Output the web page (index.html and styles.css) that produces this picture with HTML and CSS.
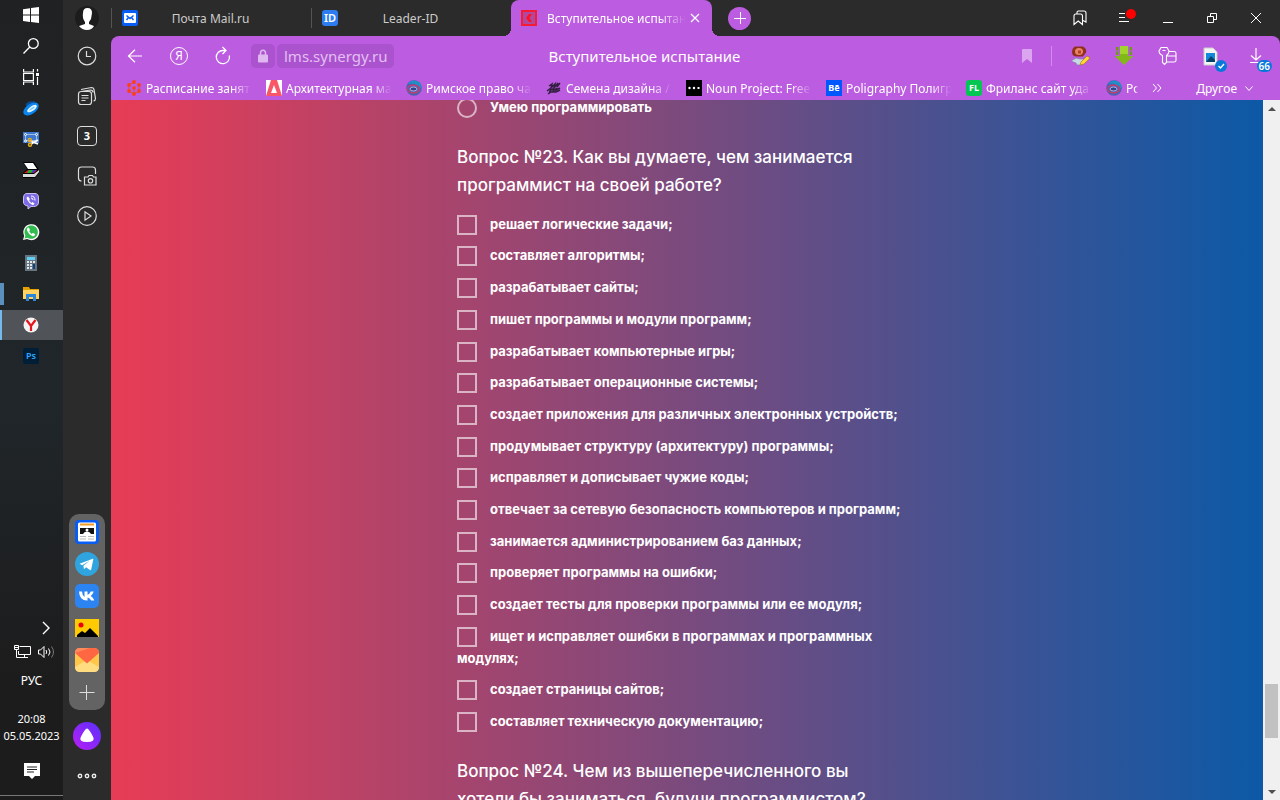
FILE: index.html
```html
<!DOCTYPE html>
<html lang="ru">
<head>
<meta charset="utf-8">
<title>Вступительное испытание</title>
<link rel="stylesheet" href="styles.css">
</head>
<body>
<nav class="taskbar" aria-label="Панель задач">
  <div class="apps">
    <button class="app" aria-label="Пуск"><svg width="16" height="16" viewBox="0 0 16 16" fill="#fff"><path d="M0 2.2 7 1.2V7.6H0zM8 1 16 0V7.6H8zM0 8.6H7V15L0 14zM8 8.6H16V16L8 15z"/></svg></button>
    <button class="app" aria-label="Поиск"><svg width="16" height="16" viewBox="0 0 16 16" fill="none" stroke="#fff" stroke-width="1.3"><circle cx="10.3" cy="5.5" r="4.9"/><path d="M6.8 9 .5 15.5"/></svg></button>
    <button class="app" aria-label="Представление задач"><svg width="16" height="16" viewBox="0 0 16 16" fill="none" stroke="#fff" stroke-width="1.2"><path d="M.6 0V3H10.4V0M.6 16V13H10.4V16M.6 4.5H10.4V11.5H.6zM14.5 0V2.5M14.5 8V16"/><path d="M13 4h3v3h-3z" fill="#fff" stroke="none"/></svg></button>
    <button class="app" aria-label="Браузер"><svg width="16" height="16" viewBox="0 0 16 16"><path d="M2.500 4 6 1.500l6-.5-2 3-6 3z" fill="#0b4d91"/><ellipse cx="8" cy="9" rx="8.800" ry="5" transform="rotate(-35 8 9)" fill="#0a84ee"/><ellipse cx="9" cy="8.600" rx="5.600" ry="2.400" transform="rotate(-35 9 8.600)" fill="#e9f9ff"/><ellipse cx="9" cy="8.600" rx="3.400" ry=".9" transform="rotate(-35 9 8.600)" fill="#7fd0ff"/></svg></button>
    <button class="app" aria-label="Ножницы"><svg width="16" height="16" viewBox="0 0 16 16"><path d="M0 1h16v11H0z" fill="#3f78cf"/><path d="M2.5 3.5h11v6h-11z" fill="none" stroke="#fff" stroke-dasharray="1 1"/><g fill="#3f78cf" stroke="#fff"><circle cx="2.5" cy="3.5" r="1"/><circle cx="13.5" cy="3.5" r="1"/><circle cx="2.5" cy="10" r="1"/></g><path d="m7 10 8 3M8 13l7-4" stroke="#fff" stroke-width="1.7"/><g fill="none" stroke="#e2aa20" stroke-width="1.5"><circle cx="6.8" cy="9" r="1.5"/><circle cx="7" cy="13.7" r="1.5"/></g></svg></button>
    <button class="app" aria-label="Сканер"><svg width="16" height="16" viewBox="0 0 16 16"><path d="M0 0h11l5 8v3l-4 5H0v-5l4-4z" fill="#000"/><path d="M1 1h9l4 6H5z" fill="#fff"/><path d="m1 11 4-3h9l-3 3z" fill="#e12"/><path d="m6 8 4 0-2 3H4z" fill="#10b431"/><path d="m10 8 3 0-3 3H9z" fill="#163ff0"/><path d="M0 12h11l5-4v2l-4 5H0z" fill="#d9d9d9"/></svg></button>
    <button class="app" aria-label="Viber"><svg width="16" height="16" viewBox="0 0 16 16"><path d="M4 .5h8Q15.5.5 15.5 5v4q0 4.5-5 4.5H8L5 16v-3Q.5 12.500.5 9V5Q.5.5 4 .5z" fill="#7c6be7" stroke="#c8bff5"/><path d="M5 3.500Q3 4 4 6.500q2 4 5.500 5.500 1.500 0 2-1.500l-2-1.500-1 1Q6.500 9 6 7l1-.8z" fill="#fff"/><path d="M8 3q4 0 4 4.500M8 5q2 0 2 2" fill="none" stroke="#fff"/></svg></button>
    <button class="app" aria-label="WhatsApp"><svg width="16" height="16" viewBox="0 0 16 16"><path d="M0 16 1.200 11.800A8 8 0 1 1 4.200 15z" fill="#fff"/><path d="m1.500 14.500.9-3A6.700 6.700 0 1 1 4.500 13.700z" fill="#32bb4f"/><path d="M5 3.500Q3.300 4.500 4 6.500q1.500 4 5.500 5.700 2.300.3 2.800-2L10 8.800l-1.200 1.100Q7 9 6.200 7.300L7 6.200 6 3.700z" fill="#fff"/></svg></button>
    <button class="app" aria-label="Калькулятор"><svg width="16" height="16" viewBox="0 0 16 16"><path d="M2 0h12v16H2z" fill="#66747f"/><path d="M4 2h8v3H4z" fill="#5fd0f3"/><path d="M4 6h2v2H4zm3 0h2v2H7zm3 0h2v2h-2zM4 9h2v2H4zm3 0h2v2H7zM4 12h2v2H4zm3 0h2v2H7z" fill="#e2e7eb"/><path d="M10 9h2v5h-2z" fill="#15407e"/></svg></button>
    <button class="app opened" aria-label="Проводник"><svg width="16" height="16" viewBox="0 0 16 16"><path d="M0 1h6l1 2h9v3H0z" fill="#e6a100"/><path d="M0 4h16v9H0z" fill="#ffd362"/><path d="M3 15V8h10v7h-3v-4H6v4z" fill="#2e86d7"/></svg></button>
    <button class="app current" aria-label="Яндекс Браузер"><svg width="16" height="16" viewBox="0 0 16 16"><circle cx="8" cy="8" r="7.500" fill="#f4f4f4"/><path d="M3.500 3 8 9l4.500-6M8 8.500V14" fill="none" stroke="#e5141d" stroke-width="2.200"/></svg></button>
    <button class="app" aria-label="Photoshop"><span class="ps">Ps</span></button>
  </div>
  <div class="tray">
    <button class="chev" aria-label="Скрытые значки"><svg width="8" height="12" viewBox="0 0 8 12" fill="none" stroke="#fff" stroke-width="1.400"><path d="m1 0 6 6-6 6"/></svg></button>
    <div class="status">
      <svg width="17" height="14" viewBox="0 0 17 14" fill="none" stroke="#fff"><path d="M5.500 1.500h11v8h-12V6M10.500 9.500v3M6 12.500h8M.5.500h4v4h-4zM2.500 4.500v8H6M1 2.500h3"/></svg>
      <svg width="17" height="14" viewBox="0 0 17 14" fill="none" stroke="#fff"><path d="M.5 5h2L6 1.500v11L2.500 9h-2zM8 5q1.500 2 0 4M10.500 3.500q3 3.500 0 7"/><path d="M13.500 1.500q4 5.500 0 11" stroke="#777"/></svg>
    </div>
    <span class="lang">РУС</span>
    <time class="clock">20:08<br>05.05.2023</time>
    <button class="notes" aria-label="Уведомления"><svg width="16" height="16" viewBox="0 0 16 16"><path d="M0 0h16v13h-5l-3 3-3-3H0z" fill="#fff"/><path d="M3 4h10M3 6.500h10M3 9h7" stroke="#222"/></svg></button>
  </div>
</nav>

<aside class="side">
  <div class="tools">
    <button aria-label="Профиль"><svg width="24" height="24" viewBox="0 0 24 24"><circle cx="12" cy="12" r="12" fill="#1c1c1c"/><path d="M8 7q0-5 4.500-5T17 7l-1 6-2 3v2l5 2q-2 4-7 4t-8-4l6-2v-2Q7 12 8 7z" fill="#fff"/></svg></button>
    <button aria-label="История"><svg width="20" height="20" viewBox="0 0 20 20" fill="none" stroke="#ddd" stroke-width="1.200"><circle cx="10" cy="10" r="8.800"/><path d="M9.500 5v5.500H14"/></svg></button>
    <button aria-label="Коллекции"><svg width="20" height="20" viewBox="0 0 20 20" fill="none" stroke="#ddd" stroke-width="1.200"><rect x="1.500" y="5.500" width="13" height="13" rx="2.500"/><path d="M4.500 9.500h7M4.500 12h7M4.500 14.500h4M4 3.500l10.500-2Q16.500 1.500 17 3.500l1.500 9q0 2-2 2.500M4 5.500l9.500-1.500Q16 4 16 6.500"/></svg></button>
    <button aria-label="Вкладки"><span class="count">3</span></button>
    <button aria-label="Скриншот"><svg width="20" height="20" viewBox="0 0 20 20" fill="none" stroke="#ddd" stroke-width="1.200"><path d="M4.500 15Q1.500 15 1.500 12V4q0-3 3-3h11q3 0 3 3v4M8.500 11H11l1-1.500h3.500l1 1.500h2.500v8h-11.500v-8z"/><circle cx="13.500" cy="14.800" r="2.200"/></svg></button>
    <button aria-label="Видео"><svg width="20" height="20" viewBox="0 0 20 20" fill="none" stroke="#ddd" stroke-width="1.200"><circle cx="10" cy="10" r="9.300"/><path d="M8 5.800v8.400l6-4.200z"/></svg></button>
  </div>
  <div class="bottom">
    <div class="dock">
      <button aria-label="Новости"><svg width="24" height="24" viewBox="0 0 24 24"><rect width="24" height="24" rx="4" fill="#075df4"/><rect x="3" y="2.500" width="18" height="19" rx="1.500" fill="#fff"/><path d="M5 4.500h14" stroke="#f39a20" stroke-width="2"/><path d="M5 8h14v6H5z" fill="#111"/><circle cx="12" cy="10" r="1.500" fill="#fff"/><path d="M8 14q1-2.500 4-2.500t4 2.500z" fill="#fff"/><path d="M5 16.500h6M5 19h6M13 16.500h6M13 19h6" stroke="#bbb"/></svg></button>
      <button aria-label="Telegram"><svg width="24" height="24" viewBox="0 0 24 24"><circle cx="12" cy="12" r="12" fill="#2fa4de"/><path d="m4.500 11.800 13.200-5q.8-.2.600.8l-2.100 10q-.3 1-1.200.500L11 15.300l-2 2-.6-3.500L15 8.500l-7.800 4.700z" fill="#fff"/></svg></button>
      <button aria-label="ВКонтакте"><svg width="24" height="24" viewBox="0 0 24 24"><rect width="24" height="24" rx="5" fill="#2b84f2"/><path d="M4 7.500h3q.2 4 2.500 5.500v-5.500h3v3.200q2-.4 3.200-3.200h3q-.8 2.800-3 4.400 2.500 1.300 3.600 4.600h-3.200q-1.100-2.700-3.600-3v3H12Q4.300 16.500 4 7.500z" fill="#fff"/></svg></button>
      <button aria-label="Картинки"><svg width="24" height="24" viewBox="0 0 24 24"><path d="M0 3h24v18H0z" fill="#ffcb00"/><path d="M2 21v-2l5-4 3 2 5-5 8 8v1z" fill="#000"/><circle cx="6" cy="9" r="2.500" fill="#eb0010"/></svg></button>
      <button aria-label="Яндекс Почта"><svg width="24" height="24" viewBox="0 0 24 24"><rect width="24" height="24" rx="5" fill="#ffc64a"/><path d="M0 19 12 12l12 7q0 5-5 5H5q-5 0-5-5z" fill="#ffdc80"/><path d="M0 5q0-5 5-5h14q5 0 5 5L12 15.500z" fill="#ff6642"/><path d="M0 5q0-5 5-5h10z" fill="#ff8a5c"/></svg></button>
      <button aria-label="Добавить"><svg width="24" height="24" viewBox="0 0 24 24" stroke="#ddd"><path d="M4.500 12.500h15M11.500 5v15"/></svg></button>
    </div>
    <button class="alice" aria-label="Алиса"><svg width="28" height="28" viewBox="0 0 28 28"><defs><linearGradient id="al" x1="0" y1="1" x2="1" y2="0"><stop stop-color="#bb1ef5"/><stop offset="1" stop-color="#5730fb"/></linearGradient></defs><circle cx="14" cy="14" r="14" fill="url(#al)"/><path d="M14 6.500q2 0 6.200 8.500 2.500 5-6.200 5t-6.200-5Q12 6.500 14 6.500z" fill="#fff"/></svg></button>
    <button class="more" aria-label="Ещё"><svg width="20" height="6" viewBox="0 0 20 6" fill="none" stroke="#eee" stroke-width="1.400"><circle cx="3" cy="3" r="1.700"/><circle cx="10" cy="3" r="1.700"/><circle cx="17" cy="3" r="1.700"/></svg></button>
  </div>
</aside>

<div class="browser">
  <header class="strip">
    <div class="tab"><svg class="fav" viewBox="0 0 16 16"><rect width="16" height="16" rx="2" fill="#075df4"/><rect x="2" y="3" width="12" height="10" rx="1" fill="#fff"/><path d="m4.500 10 2-2.500M11.500 10l-2-2.500M4.500 5.500 8 8.500l3.500-3" fill="none" stroke="#075df4" stroke-width="1.500"/></svg><a href="#mail" class="name">Почта Mail.ru</a></div>
    <div class="tab"><span class="fav id">ID</span><a href="#leader" class="name">Leader-ID</a></div>
    <div class="tab active"><svg class="fav" viewBox="0 0 16 16"><path d="M1 1h14v14H1z" fill="#b048a0" stroke="#f51b35" stroke-width="2"/><path d="M8 4h3L8.500 8l2.500 4H8L5 8z" fill="#ff1024"/></svg><a href="#test" class="name">Вступительное испытан</a><button aria-label="Закрыть вкладку"><svg width="10" height="10" viewBox="0 0 10 10" stroke="#fff" stroke-width="1.200"><path d="m1 1 8 8m0-8L1 9"/></svg></button></div>
    <button class="plus" aria-label="Новая вкладка"><svg width="12" height="12" viewBox="0 0 12 12" stroke="#fff"><path d="M0 6.500h12M6.500 0v12"/></svg></button>
    <div class="window">
      <button aria-label="Закладки"><svg width="14" height="16" viewBox="0 0 14 16" fill="none" stroke="#fff" stroke-width="1.100"><path d="M1 14.500V6q0-2 2-2h4.500q2 0 2 2v8.500L5.200 11zM4 4V2.500Q4 1 5.500 1H11q2 0 2 2v9l-3-1.500"/></svg></button>
      <button class="menu" aria-label="Меню"><svg width="20" height="16" viewBox="0 0 20 16" stroke="#fff"><path d="M1 3.500h6M1 7.500h6M1 11.500h10"/><circle cx="13" cy="4" r="5" fill="#f00" stroke="none"/></svg></button>
      <button aria-label="Свернуть"><svg width="10" height="12" viewBox="0 0 10 12" stroke="#fff"><path d="M0 10.500h10"/></svg></button>
      <button aria-label="Восстановить"><svg width="12" height="12" viewBox="0 0 12 12" fill="none" stroke="#fff"><path d="M1.500 4.500h6v6h-6zM4.500 4.500v-3h6v6h-3"/></svg></button>
      <button aria-label="Закрыть"><svg width="12" height="12" viewBox="0 0 12 12" stroke="#fff"><path d="m1 1 10 10m0-10L1 11"/></svg></button>
    </div>
  </header>
  <div class="chrome">
    <div class="address">
      <button aria-label="Назад"><svg width="16" height="14" viewBox="0 0 16 14" fill="none" stroke="#fff" stroke-width="1.200"><path d="M15 7H1.500M8 .8 1.500 7 8 13.200"/></svg></button>
      <button aria-label="Яндекс"><span class="ya">Я</span></button>
      <button aria-label="Обновить"><svg width="16" height="18" viewBox="0 0 16 18" fill="none" stroke="#fff" stroke-width="1.300"><path d="M14.300 8.500A6.600 6.600 0 1 1 8 3.500h3M7.500 0 11 3.500 7.500 7"/></svg></button>
      <button class="lock" aria-label="Сведения о сайте"><svg width="10" height="14" viewBox="0 0 10 14"><rect y="5.500" width="10" height="8" rx="1" fill="#e0b8f0"/><path d="M2.500 6V4q0-2.800 2.500-2.800T7.500 4v2" fill="none" stroke="#e0b8f0" stroke-width="1.500"/></svg></button>
      <a class="url" href="#site">lms.synergy.ru</a>
      <span class="heading">Вступительное испытание</span>
      <div class="ext">
        <button class="mark" aria-label="В закладки"><svg width="10" height="14" viewBox="0 0 10 14" fill="#dca5ef"><path d="M0 1q0-1 1-1h8q1 0 1 1v13L5 10l-5 4z"/></svg></button>
        <button aria-label="Расширение"><svg width="20" height="20" viewBox="0 0 20 20"><path d="m1 15 5-3 4 1 4 0-3 6H7l-1-2z" fill="#c8d6e8" stroke="#73829a" stroke-width=".6"/><path d="M5 .5h8q4 2 3 6l-3 4H6Q2 10 2 6t3-5.500z" fill="#90301e"/><ellipse cx="9" cy="5.500" rx="4" ry="3.500" fill="#e78566"/><path d="M8 4.500h3v3H8z" fill="#b9402d"/><path d="m11 16 6-6 3 2-6 6-4 1z" fill="#ffd832" stroke="#a16815" stroke-width=".6"/></svg></button>
        <button aria-label="Загрузчик"><svg width="20" height="20" viewBox="0 0 20 20"><path d="M6 0h8v10h5.500L10 19 .5 10H6z" fill="#82b81a"/><path d="M6 0h8v8H6z" fill="#a2d52c"/><path d="M2 1h2.500v3.500H2zM15.500 1H18v3.500h-2.500zM2 6l2.500-1v4H2zM15.500 5 18 6v3h-2.500z" fill="#6c9c10"/></svg></button>
        <button aria-label="Пароли"><svg width="18" height="18" viewBox="0 0 18 18" fill="none" stroke="#fff" stroke-width="1.100"><path d="M3.500 8.500Q0 7 0 4l2-3.500h6L10 4q0 3-2.500 4.500v7L5.500 17.500l-2-2zM3.500 3.500h3M10 4.500h5q2 0 2 2v7q0 1.500-2 1.500H8M8 9h9"/></svg></button>
        <button class="doc" aria-label="Документы"><svg width="24" height="24" viewBox="0 0 24 24"><path d="M1 1h9l4 4v13H1z" fill="#f4f4f4" stroke="#ccc"/><path d="M3 6h9v9H3z" fill="#1488db"/><path d="m3 15 5-6 4 4v2z" fill="#074068"/><circle cx="18" cy="19" r="6" fill="#0878db"/><path d="m15.500 19 2 2 3.500-4" fill="none" stroke="#fff" stroke-width="1.400"/></svg></button>
        <button class="down" aria-label="Загрузки"><svg width="14" height="16" viewBox="0 0 14 16" fill="none" stroke="#fff" stroke-width="1.200"><path d="M7 0v12M2 7.500 7 12l5-4.500M1 14.500h12"/></svg><span class="badge">66</span></button>
      </div>
    </div>
    <div class="marks">
      <a href="#b1"><svg class="fav" viewBox="0 0 16 16"><path d="m8 2-5 3v6l5 3 5-3V5" fill="none" stroke="#e04b3a"/><path d="M8 8v6" stroke="#e04b3a"/><g fill="#ff3e14"><circle cx="8" cy="2" r="1.900"/><circle cx="3" cy="5" r="1.900"/><circle cx="13" cy="5" r="1.900"/><circle cx="3" cy="11" r="1.900"/><circle cx="13" cy="11" r="1.900"/><circle cx="8" cy="14" r="1.900"/><circle cx="8" cy="8" r="1.800"/></g></svg><span>Расписание занят</span></a>
      <a href="#b2"><svg class="fav" viewBox="0 0 16 16"><path d="M0 0h16v16H0z" fill="#f9566a"/><path d="M0 0h5L0 16zM11 0h5v16zM8 5l3 8H5z" fill="#fff"/></svg><span>Архитектурная ма</span></a>
      <a href="#b3"><svg class="fav" viewBox="0 0 16 16"><circle cx="8" cy="8" r="7.800" fill="#4a62b4"/><path d="M1.500 4Q6-1 11 1q5 2 4.500 8Q10 2 1.500 4z" fill="#2090c4"/><ellipse cx="7.500" cy="9" rx="6" ry="3.800" fill="none" stroke="#d03a68" stroke-width="1.300"/><ellipse cx="7.500" cy="9" rx="3.500" ry="2" fill="#274995" stroke="#c9a9d9"/></svg><span>Римское право ча</span></a>
      <a href="#b4"><svg class="fav" viewBox="0 0 16 16" fill="none" stroke="#352044" stroke-width="1.500"><path d="m3 6 3-2-1 4 4-4-1 4 4-5-1 4 3-4M1 11l4-3-1 3 4-3-1 3 4-3-1 2 4-2M2 14l3-2 5 0 4-2"/></svg><span>Семена дизайна /</span></a>
      <a href="#b5"><svg class="fav" viewBox="0 0 16 16"><path d="M0 0h16v16H0z"/><g fill="#fff"><circle cx="3.500" cy="8" r="1.200"/><circle cx="8" cy="8" r="1.200"/><path d="M11.500 7h2v2h-2z"/></g></svg><span>Noun Project: Free</span></a>
      <a href="#b6"><b class="fav be">Bē</b><span>Poligraphy Полигр</span></a>
      <a href="#b7"><b class="fav fl">FL</b><span>Фриланс сайт уда</span></a>
      <a href="#b8" class="short"><svg class="fav" viewBox="0 0 16 16"><circle cx="8" cy="8" r="7.800" fill="#4a62b4"/><path d="M1.500 4Q6-1 11 1q5 2 4.500 8Q10 2 1.500 4z" fill="#2090c4"/><ellipse cx="7.500" cy="9" rx="6" ry="3.800" fill="none" stroke="#d03a68" stroke-width="1.300"/><ellipse cx="7.500" cy="9" rx="3.500" ry="2" fill="#274995" stroke="#c9a9d9"/></svg><span>Ро</span></a>
      <button class="next" aria-label="Ещё закладки"><svg width="10" height="8" viewBox="0 0 10 8" fill="none" stroke="#fff"><path d="m1 0 3.500 4L1 8M5.500 0 9 4 5.500 8"/></svg></button>
      <button class="other">Другое<svg width="8" height="5" viewBox="0 0 8 5" fill="none" stroke="#fff"><path d="m.5.500 3.500 4 3.500-4"/></svg></button>
    </div>
  </div>
  <div class="view">
    <main class="page">
      <form class="quiz">
        <label class="opt radio"><input type="radio" name="q22">Умею программировать</label>
        <fieldset>
          <legend>Вопрос №23. Как вы думаете, чем занимается программист на своей работе?</legend>
          <label class="opt"><input type="checkbox">решает логические задачи;</label>
          <label class="opt"><input type="checkbox">составляет алгоритмы;</label>
          <label class="opt"><input type="checkbox">разрабатывает сайты;</label>
          <label class="opt"><input type="checkbox">пишет программы и модули программ;</label>
          <label class="opt"><input type="checkbox">разрабатывает компьютерные игры;</label>
          <label class="opt"><input type="checkbox">разрабатывает операционные системы;</label>
          <label class="opt"><input type="checkbox">создает приложения для различных электронных устройств;</label>
          <label class="opt"><input type="checkbox">продумывает структуру (архитектуру) программы;</label>
          <label class="opt"><input type="checkbox">исправляет и дописывает чужие коды;</label>
          <label class="opt"><input type="checkbox">отвечает за сетевую безопасность компьютеров и программ;</label>
          <label class="opt"><input type="checkbox">занимается администрированием баз данных;</label>
          <label class="opt"><input type="checkbox">проверяет программы на ошибки;</label>
          <label class="opt"><input type="checkbox">создает тесты для проверки программы или ее модуля;</label>
          <label class="opt"><input type="checkbox">ищет и исправляет ошибки в программах и программных модулях;</label>
          <label class="opt"><input type="checkbox">создает страницы сайтов;</label>
          <label class="opt"><input type="checkbox">составляет техническую документацию;</label>
        </fieldset>
        <fieldset>
          <legend>Вопрос №24. Чем из вышеперечисленного вы хотели бы заниматься, будучи программистом?</legend>
        </fieldset>
      </form>
    </main>
    <div class="scroll">
      <button aria-label="Вверх"><svg width="8" height="4" viewBox="0 0 8 4" fill="#505050"><path d="m0 4 4-4 4 4z"/></svg></button>
      <div class="track"><div class="thumb"></div></div>
      <button aria-label="Вниз"><svg width="8" height="4" viewBox="0 0 8 4" fill="#505050"><path d="m0 0 4 4 4-4z"/></svg></button>
    </div>
  </div>
</div>
</body>
</html>
```

FILE: styles.css
```css
* { box-sizing: border-box; }

body {
  margin: 0;
  height: 100vh;
  overflow: hidden;
  display: grid;
  grid-template-columns: 63px 48px minmax(0, 1fr);
  background: #2b2b2b;
  color: #fff;
  font: 13px/16px "Noto Sans", "Open Sans", sans-serif;
}

button {
  display: flex;
  align-items: center;
  justify-content: center;
  margin: 0;
  padding: 0;
  border: 0;
  background: none;
  color: inherit;
  font: inherit;
}

a { color: inherit; text-decoration: none; }
svg { display: block; flex: none; overflow: visible; }

/* System taskbar */
.taskbar {
  display: flex;
  flex-direction: column;
  justify-content: space-between;
  background: linear-gradient(#202122, #20262a 50%, #1c1c1c 85%);
}
.apps { display: flex; flex-direction: column; gap: 1px; }
.app { height: 30px; padding-right: 1px; }
.opened { background: linear-gradient(90deg, #5b8fbe 4px, transparent 4px) center / 100% 22px no-repeat; }
.current { background: linear-gradient(90deg, #76b9ed 2px, #505357 2px); }
.ps {
  width: 16px;
  border-radius: 2px;
  background: #001e36;
  color: #31a8ff;
  font-size: 9px;
  font-weight: 600;
}
.tray {
  display: flex;
  flex-direction: column;
  align-items: center;
  height: 182px;
  padding-bottom: 4px;
  font-size: 12px;
}
.chev { align-self: flex-end; width: 34px; height: 20px; }
.status { display: flex; gap: 7px; margin: 7px 0 14px; padding-left: 5px; }
.lang { margin-bottom: 21px; }
.clock { text-align: center; line-height: 17px; font-size: 11px; }
.notes { width: 100%; flex: 1; padding-top: 2px; border-bottom: 1px solid #777; }

/* Browser side panel */
.side { display: flex; flex-direction: column; justify-content: space-between; align-items: center; }
.tools { display: flex; flex-direction: column; align-items: center; }
.tools button { height: 40px; width: 40px; }
.tools button:first-child { height: 36px; }
.count {
  width: 20px;
  height: 20px;
  border: 1px solid #ddd;
  border-radius: 4px;
  font-size: 11px;
  line-height: 18px;
  font-weight: 700;
}
.bottom { display: flex; flex-direction: column; align-items: center; padding-bottom: 14px; }
.dock {
  display: flex;
  flex-direction: column;
  gap: 8px;
  padding: 6px;
  border-radius: 10px;
  background: #636363;
}
.alice { margin: 12px 0; }
.more { height: 20px; margin-top: 4px; }

/* Tabs */
.browser { display: flex; flex-direction: column; min-width: 0; height: 100vh; }
.strip { display: flex; align-items: center; height: 36px; }
.fav { width: 16px; height: 16px; flex: none; }
.tab {
  position: relative;
  display: flex;
  align-items: center;
  width: 200px;
  height: 20px;
  padding: 0 10px;
  border-left: 1px solid #555;
  color: #ccc;
}
.tab .name { flex: 1; text-align: center; font-size: 12px; padding: 1px 18px 0 0; }
.id {
  border-radius: 3px;
  background: #2d7cf0;
  color: #fff;
  font-size: 11px;
  font-weight: 600;
  text-align: center;
}
.tab.active {
  width: 201px;
  height: 36px;
  padding: 0 12px 0 10px;
  border: 0;
  border-radius: 8px 8px 0 0;
  background: #bc5ce0;
  color: #fff;
}
.tab.active::before,
.tab.active::after {
  content: "";
  position: absolute;
  bottom: 0;
  width: 8px;
  height: 8px;
}
.tab.active::before { left: -8px; background: radial-gradient(circle at 0 0, transparent 8px, #bc5ce0 8px); }
.tab.active::after { right: -8px; background: radial-gradient(circle at 100% 0, transparent 8px, #bc5ce0 8px); }
.tab.active .name {
  margin: 0 4px 0 10px;
  padding: 1px 0 0;
  overflow: hidden;
  white-space: nowrap;
  text-align: left;
  mask-image: linear-gradient(90deg, #000 80%, transparent);
}
.plus { width: 23px; height: 23px; margin-left: 16px; border-radius: 50%; background: #bc5ce0; }
.window { display: flex; margin-left: auto; padding-right: 2px; }
.window button { width: 44px; height: 36px; }
.window .menu { padding-left: 8px; }

/* Address bar and bookmarks */
.chrome { background: #bc5ce0; border-radius: 8px 8px 0 0; }
.address { display: flex; align-items: center; height: 40px; padding: 0 2px; }
.address > button { width: 44px; height: 36px; }
.address > .lock { width: 24px; height: 24px; margin: 0 2px 0 6px; border-radius: 5px; background: #ab53cf; }
.ya { width: 18px; height: 18px; border: 1px solid #fff; border-radius: 50%; line-height: 16px; font-size: 12px; }
.url {
  height: 24px;
  padding: 0 7px;
  border-radius: 5px;
  background: #ab53cf;
  color: #e3bff2;
  font-size: 15px;
  line-height: 24px;
}
.heading { margin-left: 154px; font-size: 15px; line-height: 24px; white-space: nowrap; }
.ext { display: flex; align-items: center; margin-left: auto; }
.ext button { position: relative; width: 44px; height: 36px; }
.ext .mark { height: 20px; margin-right: 6px; padding-right: 6px; border-right: 1px solid #d08ce9; }
.doc { padding: 6px 0 0 6px; }
.badge {
  position: absolute;
  right: 6px;
  bottom: 2px;
  padding: 0 2px;
  border-radius: 6px;
  background: #0878db;
  font-size: 10px;
  line-height: 12px;
  font-weight: 600;
}
.marks { display: flex; align-items: center; height: 24px; padding-left: 15px; font-size: 12px; }
.marks a { display: flex; align-items: center; gap: 4px; width: 126px; margin-right: 14px; }
.marks a span {
  flex: 1;
  padding-top: 1px;
  overflow: hidden;
  white-space: nowrap;
  mask-image: linear-gradient(90deg, #000 80%, transparent);
}
.marks .short { width: 32px; }
.be, .fl { color: #fff; font-size: 9px; text-align: center; background: #0057ff; }
.fl { border-radius: 3px; background: #05c553; }
.next { width: 10px; }
.other { gap: 8px; margin: 0 27px 0 auto; padding-top: 1px; }

/* Page */
.view { display: flex; flex: 1; min-height: 0; }
.page {
  flex: 1;
  overflow: hidden;
  background: linear-gradient(90deg, #e83c55, #0c59a6);
  font-family: Inter, sans-serif;
}
.quiz { max-width: 460px; margin: -3px auto 0; }
fieldset { margin: 0; padding: 0; border: 0; min-width: 0; }
legend {
  padding: 14px 16px 15px 0;
  font-size: 17px;
  line-height: 28px;
  font-weight: 500;
}
.opt {
  display: block;
  margin-bottom: 10px;
  font-size: 13px;
  line-height: 1.67;
  font-weight: 700;
}
.opt input {
  appearance: none;
  float: left;
  width: 20px;
  height: 20px;
  margin: 1px 13px 0 0;
  border: 2px solid rgba(255, 255, 255, 0.6);
}
.radio input { border-radius: 50%; }

/* Scrollbar */
.scroll { display: flex; flex-direction: column; width: 17px; background: #f0f0f0; }
.scroll button { height: 17px; }
.track { display: flex; flex-direction: column; flex: 1; padding: 0 2px; }
.track::before { content: ""; flex: 567; }
.thumb { flex: 54; background: #c1c1c1; }
.track::after { content: ""; flex: 45; }
```
